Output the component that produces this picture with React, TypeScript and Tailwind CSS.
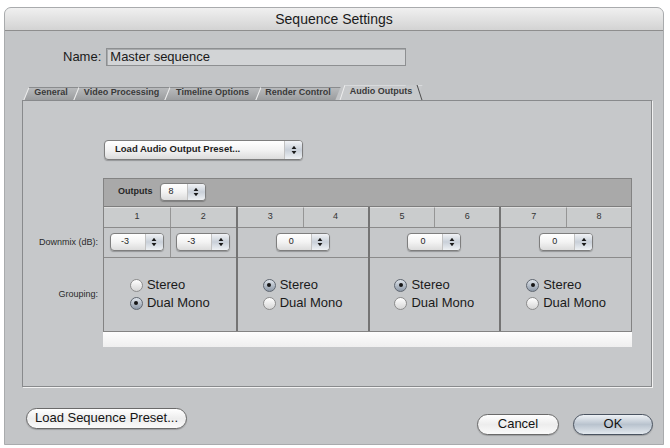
import React from "react";

const tabs = [
  { label: "General", w: "w-[50px]" },
  { label: "Video Processing", w: "w-[91px]" },
  { label: "Timeline Options", w: "w-[91px]" },
  { label: "Render Control", w: "w-[80px]" },
];

const groups = [
  { ch: ["1", "2"], mix: ["-3", "-3"], stereo: false },
  { ch: ["3", "4"], mix: ["0"], stereo: true },
  { ch: ["5", "6"], mix: ["0"], stereo: true },
  { ch: ["7", "8"], mix: ["0"], stereo: true },
];

function Arrows() {
  return (
    <svg width="6" height="10" viewBox="0 0 6 10">
      <path d="M3 0.8 L5.4 4 H0.6 Z" fill="#1b1b1b" />
      <path d="M3 9.2 L5.4 6 H0.6 Z" fill="#1b1b1b" />
    </svg>
  );
}

function Stepper({ value, w, h = "h-[18px]", text = "text-[9px] pl-[10px]" }: { value: string; w: string; h?: string; text?: string }) {
  return (
    <div className={`flex ${w} ${h} overflow-hidden rounded-[4px] border border-[#7e7e7e] bg-linear-to-b from-white via-[#f3f3f3] to-[#dcdcdc] shadow-[0_1px_1px_rgba(0,0,0,0.25)]`}>
      <div className={`flex flex-1 items-center text-[#1e1e1e] ${text}`}>{value}</div>
      <div className="flex w-[18px] items-center justify-center border-l border-[#c2c2c2] bg-linear-to-b from-[#f1f3f6] via-[#c9d0d9] to-[#eef1f4]">
        <Arrows />
      </div>
    </div>
  );
}

function Radio({ on, label }: { on: boolean; label: string }) {
  return (
    <div className="flex h-[18px] items-center gap-[4px] text-[13px] text-[#1a1a1a]">
      {on ? (
        <span className="flex h-[13px] w-[13px] items-center justify-center rounded-full border border-[#5f6670] bg-linear-to-b from-[#dfe4ea] to-[#8d99a8]">
          <span className="h-[4px] w-[4px] rounded-full bg-[#151515]" />
        </span>
      ) : (
        <span className="h-[13px] w-[13px] rounded-full border border-[#8c8c8c] bg-linear-to-b from-white to-[#d6d6d6]" />
      )}
      <span>{label}</span>
    </div>
  );
}

function PillButton({ label, w, primary }: { label: string; w: string; primary?: boolean }) {
  return (
    <div
      className={`flex h-[21px] ${w} items-center justify-center rounded-full border text-[13px] text-[#141414] shadow-[0_1px_1px_rgba(0,0,0,0.2)] ${
        primary
          ? "border-[#4a5360] bg-linear-to-b from-[#eef2f6] via-[#b9c3ce] to-[#e3e9ef]"
          : "border-[#6a6a6a] bg-linear-to-b from-white via-[#ededed] to-[#fafafa]"
      }`}
    >
      {label}
    </div>
  );
}

export default function App() {
  return (
    <div className="h-[448px] w-[670px] overflow-hidden bg-white pt-[7px] pl-[4px] font-['Liberation_Sans',Arial,sans-serif]">
      <div className="flex h-[438px] w-[660px] flex-col rounded-t-[7px] border border-[#a9abad] bg-[#c3c5c7]">
        {/* title bar */}
        <div className="flex h-[23px] items-center justify-center rounded-t-[6px] border-b border-[#8e8e8e] bg-linear-to-b from-[#f0f0f0] to-[#d3d3d3] text-[14px] text-[#1a1a1a]">
          Sequence Settings
        </div>

        {/* name */}
        <div className="mt-[16px] flex items-center pl-[58px]">
          <span className="mr-[5px] text-[13px] text-[#1a1a1a]">Name:</span>
          <div className="flex h-[18px] w-[300px] items-center border border-[#8d8f91] bg-[#d2d4d6] pl-[3px] text-[13px] text-[#1a1a1a] shadow-[inset_1px_1px_0_#a9abad]">
            Master sequence
          </div>
        </div>

        {/* tabs */}
        <div className="mt-[19px] flex h-[14px] items-end pl-[21px]">
          {tabs.map((t) => (
            <div key={t.label} className={`relative flex h-[13px] ${t.w} items-center justify-center`}>
              <div className="absolute inset-0 -skew-x-[22deg] border-t border-l border-t-[#8a8c8e] border-l-[#eeeeee] bg-linear-to-b from-[#b8babc] to-[#9b9d9f]" />
              <span className="relative text-[9px] font-bold text-[#3a3a3a]">{t.label}</span>
            </div>
          ))}
          <div className="relative ml-[4px] flex h-[15px] w-[82px] items-center justify-center">
            <div className="absolute inset-y-0 left-0 right-[4px] -skew-x-[18deg] border-t border-l border-t-[#d8dadc] border-l-[#eeeeee] bg-[#c7c9cb]" />
            <div className="absolute inset-y-0 right-[4px] w-[12px] skew-x-[18deg] border-r border-r-[#4d4d4d] bg-[#c7c9cb]" />
            <span className="relative mr-[4px] text-[9px] font-bold text-[#3a3a3a]">Audio Outputs</span>
          </div>
        </div>

        {/* panel */}
        <div className="ml-[17px] h-[287px] w-[630px] border border-[#888a8c] bg-[#c6c8ca] shadow-[1px_1px_0_#f2f2f2]">
          <div className="mt-[39px] ml-[81px]">
            <Stepper value="Load Audio Output Preset..." w="w-[199px]" h="h-[20px]" text="text-[9.5px] font-bold pl-[10px]" />
          </div>

          <div className="mt-[18px] flex">
            {/* row labels */}
            <div className="flex w-[80px] flex-col text-[9px] text-[#2a2a2a]">
              <div className="h-[50px]" />
              <div className="flex h-[30px] items-center justify-end pr-[5px]">Downmix (dB):</div>
              <div className="flex h-[74px] items-center justify-end pr-[5px]">Grouping:</div>
            </div>

            {/* table */}
            <div className="flex w-[529px] flex-col">
              <div className="border border-[#838383]">
                <div className="flex h-[28px] items-center gap-[7px] border-b border-[#7d7d7d] bg-[#a9a9a9] pl-[14px]">
                  <span className="text-[9px] font-bold text-[#262626]">Outputs</span>
                  <Stepper value="8" w="w-[46px]" text="text-[9px] pl-[8px]" />
                </div>
                <div className="grid grid-cols-4">
                  {groups.map((g, gi) => (
                    <div key={gi} className={`flex flex-col ${gi > 0 ? "border-l-2 border-[#747474]" : ""}`}>
                      <div className="grid h-[21px] grid-cols-2 border-b border-[#8b8b8b] bg-[#cacccd] text-[9px] text-[#333]">
                        {g.ch.map((c, ci) => (
                          <div key={c} className={`flex items-center justify-center border-t border-t-[#e0e0e0] ${ci > 0 ? "border-l border-[#959595]" : ""}`}>
                            {c}
                          </div>
                        ))}
                      </div>
                      {g.mix.length === 2 ? (
                        <div className="grid h-[30px] grid-cols-2 border-b border-[#8b8b8b]">
                          {g.mix.map((m, mi) => (
                            <div key={mi} className={`flex items-center justify-center ${mi > 0 ? "border-l border-[#959595]" : ""}`}>
                              <Stepper value={m} w="w-[54px]" text="text-[9px] pl-[10px]" />
                            </div>
                          ))}
                        </div>
                      ) : (
                        <div className="flex h-[30px] items-center justify-center border-b border-[#8b8b8b]">
                          <Stepper value={g.mix[0]} w="w-[54px]" text="text-[9px] pl-[12px]" />
                        </div>
                      )}
                      <div className="flex h-[73px] items-center justify-center">
                        <div className="flex flex-col items-start">
                          <Radio on={g.stereo} label="Stereo" />
                          <Radio on={!g.stereo} label="Dual Mono" />
                        </div>
                      </div>
                    </div>
                  ))}
                </div>
              </div>
              <div className="h-[15px] bg-linear-to-b from-[#fdfdfd] to-[#efefef]" />
            </div>
          </div>
        </div>

        {/* bottom buttons */}
        <div className="mt-[21px] flex items-start pl-[21px]">
          <PillButton label="Load Sequence Preset..." w="w-[161px]" />
          <div className="ml-auto mt-[6px] mr-[10px] flex gap-[14px]">
            <PillButton label="Cancel" w="w-[82px]" />
            <PillButton label="OK" w="w-[80px]" primary />
          </div>
        </div>
      </div>
    </div>
  );
}
